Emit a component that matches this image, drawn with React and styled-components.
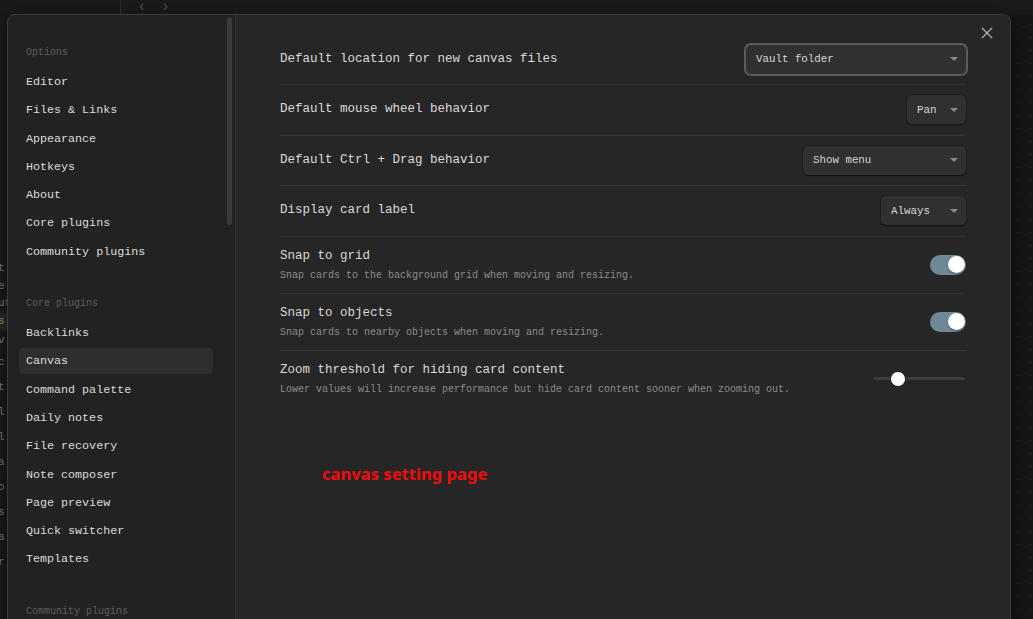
import React from "react";
import styled, { createGlobalStyle } from "styled-components";

const Global = createGlobalStyle`
  html, body { margin: 0; padding: 0; background: #1c1c1c; overflow: hidden; }
  #root { width: 100vw; height: 100vh; }
  * { box-sizing: border-box; }
`;

const mono = `"Liberation Mono", "DejaVu Sans Mono", monospace`;

const Page = styled.div`
  position: relative;
  width: 100%;
  height: 100%;
  display: grid;
  grid-template-columns: 121px 1fr;
  overflow: hidden;
  font-family: ${mono};
`;

const FilePane = styled.div`
  background: #1a1a1a;
  border-right: 1px solid #2c2c2c;
  padding-top: 260px;
  display: flex;
  flex-direction: column;
`;

const FileLine = styled.div`
  height: ${(p) => p.$h}px;
  line-height: ${(p) => p.$h}px;
  font-size: 11px;
  color: ${(p) => (p.$warm ? "#a88c5c" : "#7a7a7a")};
  background: ${(p) => (p.$active ? "#2a2a2a" : "transparent")};
  white-space: nowrap;
  margin-left: -2px;
`;

const Workspace = styled.div`
  display: flex;
  flex-direction: column;
  background: #1b1b1b;
`;

const TopBar = styled.div`
  height: 14px;
  display: flex;
  align-items: flex-end;
  gap: 14px;
  padding: 0 0 0 16px;
  color: #4a4a4a;
  font-size: 16px;
  line-height: 14px;
  overflow: hidden;
`;

const CanvasArea = styled.div`
  flex: 1;
  background-color: #161616;
  background-image: radial-gradient(circle, #262626 0.8px, transparent 1.2px);
  background-size: 13px 13px;
  background-position: 6px 4px;
`;

const Modal = styled.div`
  position: absolute;
  left: 7px;
  top: 14px;
  width: 1004px;
  height: 660px;
  border: 1px solid #3c3c3c;
  border-radius: 8px;
  background: #262626;
  display: grid;
  grid-template-columns: 228px 1fr;
  overflow: hidden;
  box-shadow: 0 4px 20px rgba(0, 0, 0, 0.5);
`;

const Sidebar = styled.nav`
  position: relative;
  background: #222222;
  border-right: 1px solid #333333;
  padding: 30px 22px 0 11px;
  display: flex;
  flex-direction: column;
`;

const ScrollThumb = styled.div`
  position: absolute;
  right: 3px;
  top: 2px;
  width: 5px;
  height: 208px;
  border-radius: 3px;
  background: #3a3a3a;
`;

const NavGroup = styled.div`
  display: flex;
  flex-direction: column;
  margin-bottom: 29px;
`;

const NavHeader = styled.div`
  font-size: 10px;
  line-height: 15px;
  color: #5e5e5e;
  padding: 0 7px;
  margin-bottom: 9px;
`;

const NavItem = styled.div`
  height: 26px;
  line-height: 26px;
  margin-bottom: 2.3px;
  padding: 0 7px;
  font-size: 11.7px;
  color: #dcdcdc;
  border-radius: 4px;
  background: ${(p) => (p.$active ? "#2e2e2e" : "transparent")};
  white-space: nowrap;
`;

const Content = styled.main`
  position: relative;
  padding: 19px 44px 0 44px;
  display: flex;
  flex-direction: column;
`;

const CloseButton = styled.div`
  position: absolute;
  top: 11px;
  right: 16px;
  width: 14px;
  height: 14px;
  display: flex;
  align-items: center;
  justify-content: center;
`;

const Row = styled.div`
  display: flex;
  align-items: center;
  justify-content: space-between;
  gap: 20px;
  min-height: ${(p) => (p.$two ? "auto" : p.$first ? "50px" : "50.5px")};
  padding: 10px 0;
  border-top: ${(p) => (p.$first ? "none" : "1px solid #363636")};
`;

const Info = styled.div`
  display: flex;
  flex-direction: column;
`;

const Title = styled.div`
  font-size: 12.5px;
  line-height: 19px;
  color: #dadada;
  white-space: nowrap;
`;

const Desc = styled.div`
  font-size: 10px;
  line-height: 15px;
  margin-top: 2px;
  color: #8c8c8c;
  white-space: nowrap;
`;

const Dropdown = styled.div`
  width: ${(p) => p.$w}px;
  height: 29px;
  flex-shrink: 0;
  display: flex;
  align-items: center;
  justify-content: space-between;
  padding: 0 8px 0 10px;
  border-radius: 5px;
  background: #303030;
  box-shadow: ${(p) =>
    p.$focus
      ? "0 0 0 2px #5c5c5c"
      : "0 1px 2px rgba(0,0,0,0.45), 0 0 0 1px rgba(0,0,0,0.15)"};
  font-size: 10.8px;
  color: #d6d6d6;
  white-space: nowrap;
`;

const Caret = styled.span`
  width: 0;
  height: 0;
  border-left: 4px solid transparent;
  border-right: 4px solid transparent;
  border-top: 4px solid #8a8a8a;
`;

const Toggle = styled.div`
  width: 36px;
  height: 20px;
  flex-shrink: 0;
  border-radius: 10px;
  background: #6f8898;
  display: flex;
  align-items: center;
  justify-content: flex-end;
  padding: 0 1px;
`;

const Knob = styled.div`
  width: 17px;
  height: 17px;
  border-radius: 50%;
  background: #ffffff;
  box-shadow: 0 1px 2px rgba(0, 0, 0, 0.35);
`;

const Slider = styled.div`
  position: relative;
  width: 92px;
  height: 3px;
  flex-shrink: 0;
  margin-right: 1px;
  border-radius: 2px;
  background: #3d3d3d;
`;

const Thumb = styled.div`
  position: absolute;
  top: 50%;
  width: 16px;
  height: 16px;
  margin-top: -8px;
  border-radius: 50%;
  background: #ffffff;
  border: 1px solid #1e1e1e;
`;

const Annotation = styled.div`
  margin: 55px 0 0 42px;
  font-family: "Noto Sans", "Open Sans", sans-serif;
  font-weight: 700;
  font-size: 16.6px;
  line-height: 24px;
  color: #f20d0d;
`;

const fileLines = [
  { t: "t", h: 17.5 },
  { t: "e", h: 17.5 },
  { t: "ut", h: 17.5, warm: true },
  { t: "s.", h: 17.5, warm: true, active: true },
  { t: "v", h: 20 },
  { t: "c", h: 25 },
  { t: "t", h: 25 },
  { t: "l", h: 25 },
  { t: "l", h: 25 },
  { t: "a", h: 25 },
  { t: "o", h: 25 },
  { t: "s", h: 25 },
  { t: "a", h: 25 },
  { t: "r", h: 25 },
];

const options = ["Editor", "Files & Links", "Appearance", "Hotkeys", "About", "Core plugins", "Community plugins"];
const core = [
  "Backlinks",
  "Canvas",
  "Command palette",
  "Daily notes",
  "File recovery",
  "Note composer",
  "Page preview",
  "Quick switcher",
  "Templates",
];

export default function App() {
  return (
    <>
      <Global />
      <Page>
        <FilePane>
          {fileLines.map((l, i) => (
            <FileLine key={i} $h={l.h} $warm={l.warm} $active={l.active}>
              {l.t}
            </FileLine>
          ))}
        </FilePane>
        <Workspace>
          <TopBar>
            <span>‹</span>
            <span>›</span>
          </TopBar>
          <CanvasArea />
        </Workspace>

        <Modal>
          <Sidebar>
            <ScrollThumb />
            <NavGroup>
              <NavHeader>Options</NavHeader>
              {options.map((o) => (
                <NavItem key={o}>{o}</NavItem>
              ))}
            </NavGroup>
            <NavGroup>
              <NavHeader>Core plugins</NavHeader>
              {core.map((o) => (
                <NavItem key={o} $active={o === "Canvas"}>
                  {o}
                </NavItem>
              ))}
            </NavGroup>
            <NavGroup>
              <NavHeader>Community plugins</NavHeader>
            </NavGroup>
          </Sidebar>

          <Content>
            <CloseButton>
              <svg width="12" height="12" viewBox="0 0 12 12">
                <path d="M1 1 L11 11 M11 1 L1 11" stroke="#b0b0b0" strokeWidth="1.3" fill="none" />
              </svg>
            </CloseButton>

            <Row $first>
              <Title>Default location for new canvas files</Title>
              <Dropdown $w={220} $focus>
                <span>Vault folder</span>
                <Caret />
              </Dropdown>
            </Row>
            <Row>
              <Title>Default mouse wheel behavior</Title>
              <Dropdown $w={59}>
                <span>Pan</span>
                <Caret />
              </Dropdown>
            </Row>
            <Row>
              <Title>Default Ctrl + Drag behavior</Title>
              <Dropdown $w={163}>
                <span>Show menu</span>
                <Caret />
              </Dropdown>
            </Row>
            <Row>
              <Title>Display card label</Title>
              <Dropdown $w={85}>
                <span>Always</span>
                <Caret />
              </Dropdown>
            </Row>
            <Row $two>
              <Info>
                <Title>Snap to grid</Title>
                <Desc>Snap cards to the background grid when moving and resizing.</Desc>
              </Info>
              <Toggle>
                <Knob />
              </Toggle>
            </Row>
            <Row $two>
              <Info>
                <Title>Snap to objects</Title>
                <Desc>Snap cards to nearby objects when moving and resizing.</Desc>
              </Info>
              <Toggle>
                <Knob />
              </Toggle>
            </Row>
            <Row $two>
              <Info>
                <Title>Zoom threshold for hiding card content</Title>
                <Desc>Lower values will increase performance but hide card content sooner when zooming out.</Desc>
              </Info>
              <Slider>
                <Thumb style={{ left: "17px" }} />
              </Slider>
            </Row>

            <Annotation>canvas setting page</Annotation>
          </Content>
        </Modal>
      </Page>
    </>
  );
}
